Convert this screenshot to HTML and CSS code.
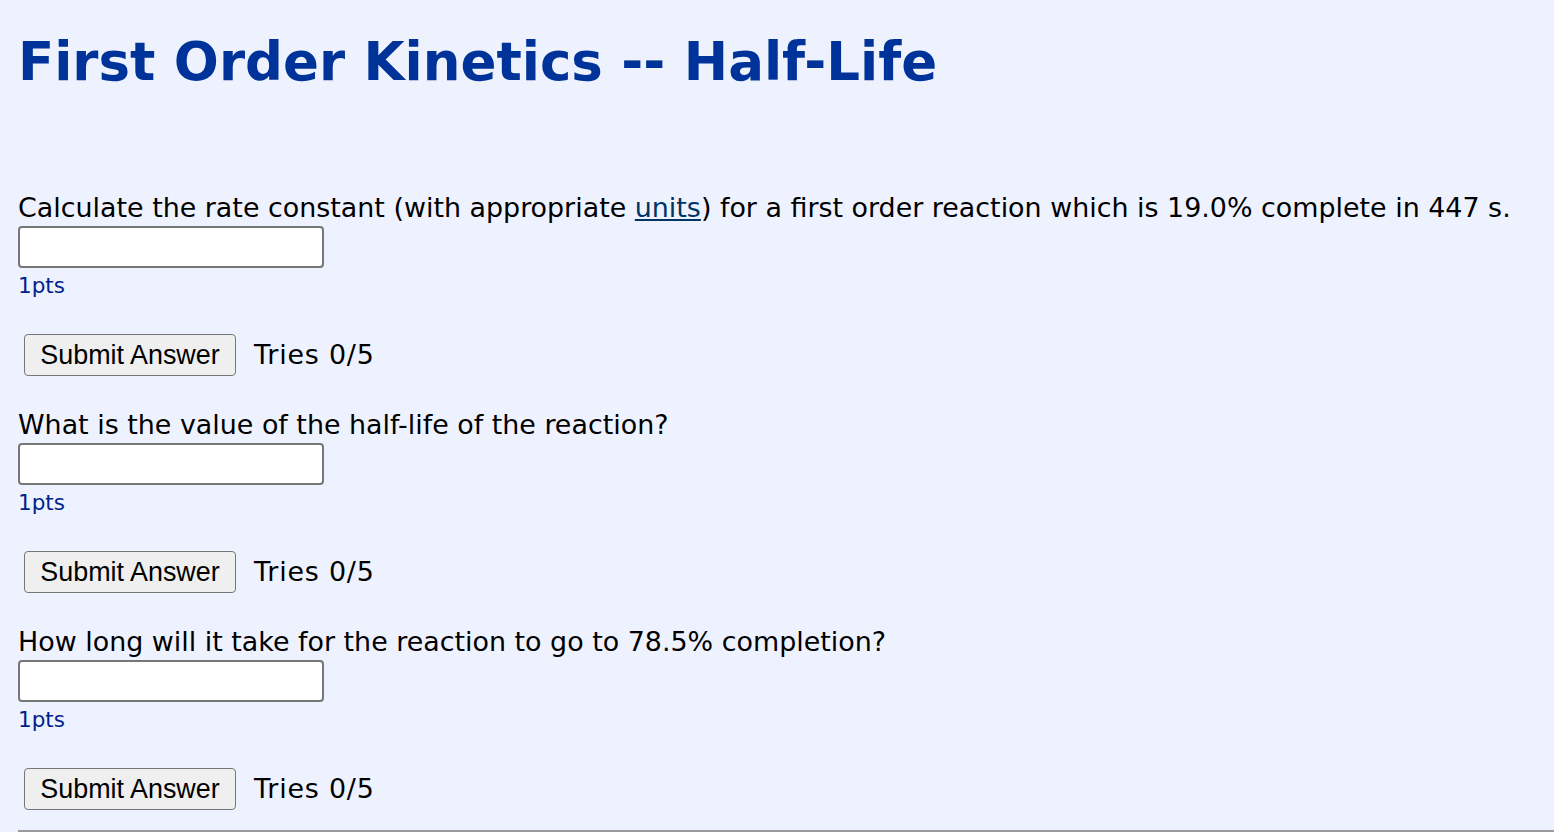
FILE: index.html
```html
<!DOCTYPE html>
<html>
<head>
<meta charset="utf-8">
<link rel="stylesheet" href="styles.css">
</head>
<body>
<h1 class="title">First Order Kinetics -- Half-Life</h1>
<div class="questions">
  <div class="question">
    <div class="prompt">Calculate the rate constant (with appropriate <a class="link" href="#">units</a>) for a first order reaction which is 19.0% complete in 447 s.</div>
    <input class="answer" type="text">
    <div class="pts">1pts</div>
    <div class="actions"><button class="submit">Submit Answer</button><span class="tries">Tries 0/5</span></div>
  </div>
  <div class="question">
    <div class="prompt">What is the value of the half-life of the reaction?</div>
    <input class="answer" type="text">
    <div class="pts">1pts</div>
    <div class="actions"><button class="submit">Submit Answer</button><span class="tries">Tries 0/5</span></div>
  </div>
  <div class="question">
    <div class="prompt">How long will it take for the reaction to go to 78.5% completion?</div>
    <input class="answer" type="text">
    <div class="pts">1pts</div>
    <div class="actions"><button class="submit">Submit Answer</button><span class="tries">Tries 0/5</span></div>
  </div>
</div>
<hr class="rule">
</body>
</html>
```
FILE: styles.css
```css
html, body {
  margin: 0;
  padding: 0;
  background: #eef2ff;
}
body {
  padding: 0 0 0 18px;
  font-family: "DejaVu Sans", Verdana, sans-serif;
  color: #000;
  overflow: hidden;
}
.title {
  margin: 0;
  padding-top: 32px;
  height: 60px;
  font-size: 53px;
  line-height: 60px;
  font-weight: bold;
  color: #003399;
}
.questions {
  display: flex;
  flex-direction: column;
  margin-top: 103px;
}
.question {
  display: flex;
  flex-direction: column;
  align-items: flex-start;
  margin-bottom: 36px;
}
.question:last-child {
  margin-bottom: 20px;
}
.prompt {
  font-size: 26.9px;
  line-height: 26px;
  height: 26px;
}
.link {
  color: #003366;
  text-decoration: underline;
}
.answer {
  margin: 5px 0 0 0;
  width: 306px;
  height: 42px;
  box-sizing: border-box;
  border: 2px solid #767676;
  border-radius: 4px;
  background: #fff;
  padding: 0 6px;
  font-size: 22px;
}
.pts {
  margin-top: 7px;
  font-size: 21.5px;
  line-height: 22px;
  color: #002288;
}
.actions {
  margin-top: 37px;
  display: flex;
  align-items: center;
  gap: 18px;
  padding-left: 6px;
}
.submit {
  height: 42px;
  width: 212px;
  box-sizing: border-box;
  padding: 0;
  border: 1.5px solid #767676;
  border-radius: 4px;
  background: #efefef;
  font-family: "Liberation Sans", Arial, sans-serif;
  font-size: 26.9px;
  color: #000;
}
.tries {
  font-size: 26.9px;
  line-height: 26px;
  letter-spacing: 0.8px;
}
.rule {
  margin: 0 0 0 0;
  border: 0;
  border-top: 2px solid #999;
}
```
